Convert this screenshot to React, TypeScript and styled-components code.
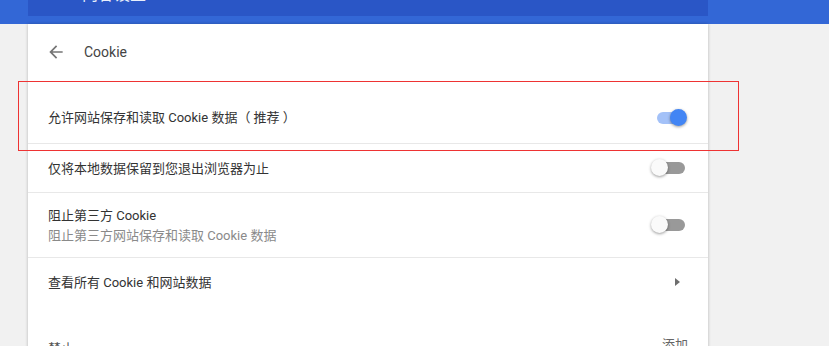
import React, { useState } from 'react';
import styled, { createGlobalStyle } from 'styled-components';

const GlobalStyle = createGlobalStyle`
  html, body {
    margin: 0;
    padding: 0;
    background: #f1f1f1;
    overflow: hidden;
  }
  body {
    font-family: Roboto, "Noto Sans CJK SC", sans-serif;
    font-size: 13px;
    color: #333;
  }
`;

const Page = styled.div`
  position: relative;
  width: 829px;
  height: 346px;
  overflow: hidden;
`;

const TopBar = styled.div`
  height: 24px;
  background: #3367d6;
  padding: 0 28px;
`;

const Toolbar = styled.div`
  width: 680px;
  height: 16px;
  background: #2a56c6;
  overflow: hidden;
`;

const ToolbarInner = styled.div`
  display: flex;
  align-items: center;
  gap: 14px;
  height: 32px;
  margin-top: -23px;
  padding-left: 24px;
  color: #e8eefc;
  font-size: 16px;
`;

const Card = styled.div`
  width: 680px;
  margin-left: 28px;
  background: #fff;
  box-shadow: 0 0 3px rgba(0, 0, 0, 0.25);
  min-height: 330px;
`;

const SubpageHeader = styled.div`
  display: flex;
  align-items: center;
  height: 56px;
  padding: 0 18px;
  gap: 18px;
  font-size: 14px;
  color: #444;
`;

const IconButton = styled.span`
  display: flex;
  align-items: center;
  color: #757575;
`;

const Row = styled.div<{ $height: number; $offset?: number; $border?: boolean }>`
  display: flex;
  align-items: center;
  justify-content: space-between;
  height: ${p => p.$height}px;
  padding: ${p => p.$offset || 0}px 23px 0 20px;
  box-sizing: border-box;
  border-bottom: ${p => (p.$border ? '1px solid #e8e8e8' : 'none')};
`;

const Label = styled.div`
  display: flex;
  flex-direction: column;
  gap: 3px;
  line-height: 17px;
`;

const Secondary = styled.div`
  color: #8a8a8a;
`;

const Track = styled.span<{ $on: boolean }>`
  position: relative;
  display: inline-block;
  width: 28px;
  height: 12px;
  border-radius: 6px;
  background: ${p => (p.$on ? '#a3c1f8' : '#999')};
  cursor: pointer;
`;

const Knob = styled.span<{ $on: boolean }>`
  position: absolute;
  top: -3px;
  left: ${p => (p.$on ? '13px' : '-6px')};
  width: 17px;
  height: 17px;
  border-radius: 50%;
  background: ${p => (p.$on ? '#4285f4' : '#fafafa')};
  box-shadow: 0 1px 3px rgba(0, 0, 0, 0.4);
`;

const Triangle = styled.span`
  width: 0;
  height: 0;
  margin-right: 5px;
  border-top: 4px solid transparent;
  border-bottom: 4px solid transparent;
  border-left: 5px solid #6e6e6e;
`;

const SectionHeader = styled.div`
  display: flex;
  justify-content: space-between;
  align-items: flex-start;
  padding: 28px 20px 0 20px;
`;

const Category = styled.div`
  margin-top: 4px;
  color: #555;
`;

const AddButton = styled.span`
  color: #666;
  font-size: 13px;
`;

const Highlight = styled.div`
  position: absolute;
  left: 18px;
  top: 81px;
  width: 719px;
  height: 68px;
  border: 1px solid #ee3333;
  pointer-events: none;
`;

function Toggle({ initial }: { initial: boolean }) {
  const [on, setOn] = useState(initial);
  return (
    <Track $on={on} onClick={() => setOn(!on)}>
      <Knob $on={on} />
    </Track>
  );
}

function BackArrow({ color, size }: { color: string; size: number }) {
  return (
    <svg width={size} height={size} viewBox="0 0 24 24">
      <path d="M20 11H7.83l5.59-5.59L12 4l-8 8 8 8 1.41-1.41L7.83 13H20v-2z" fill={color} />
    </svg>
  );
}

export default function App() {
  return (
    <Page>
      <GlobalStyle />
      <TopBar>
        <Toolbar>
          <ToolbarInner>
            <BackArrow color="#e8eefc" size={16} />
            <span>内容设置</span>
          </ToolbarInner>
        </Toolbar>
      </TopBar>
      <Card>
        <SubpageHeader>
          <IconButton>
            <BackArrow color="#757575" size={20} />
          </IconButton>
          <span>Cookie</span>
        </SubpageHeader>
        <Row $height={64} $offset={12} $border>
          <Label>允许网站保存和读取 Cookie 数据（ 推荐 ）</Label>
          <Toggle initial={true} />
        </Row>
        <Row $height={49} $border>
          <Label>仅将本地数据保留到您退出浏览器为止</Label>
          <Toggle initial={false} />
        </Row>
        <Row $height={65} $border>
          <Label>
            <div>阻止第三方 Cookie</div>
            <Secondary>阻止第三方网站保存和读取 Cookie 数据</Secondary>
          </Label>
          <Toggle initial={false} />
        </Row>
        <Row $height={48}>
          <Label>查看所有 Cookie 和网站数据</Label>
          <Triangle />
        </Row>
        <SectionHeader>
          <Category>禁止</Category>
          <AddButton>添加</AddButton>
        </SectionHeader>
      </Card>
      <Highlight />
    </Page>
  );
}
